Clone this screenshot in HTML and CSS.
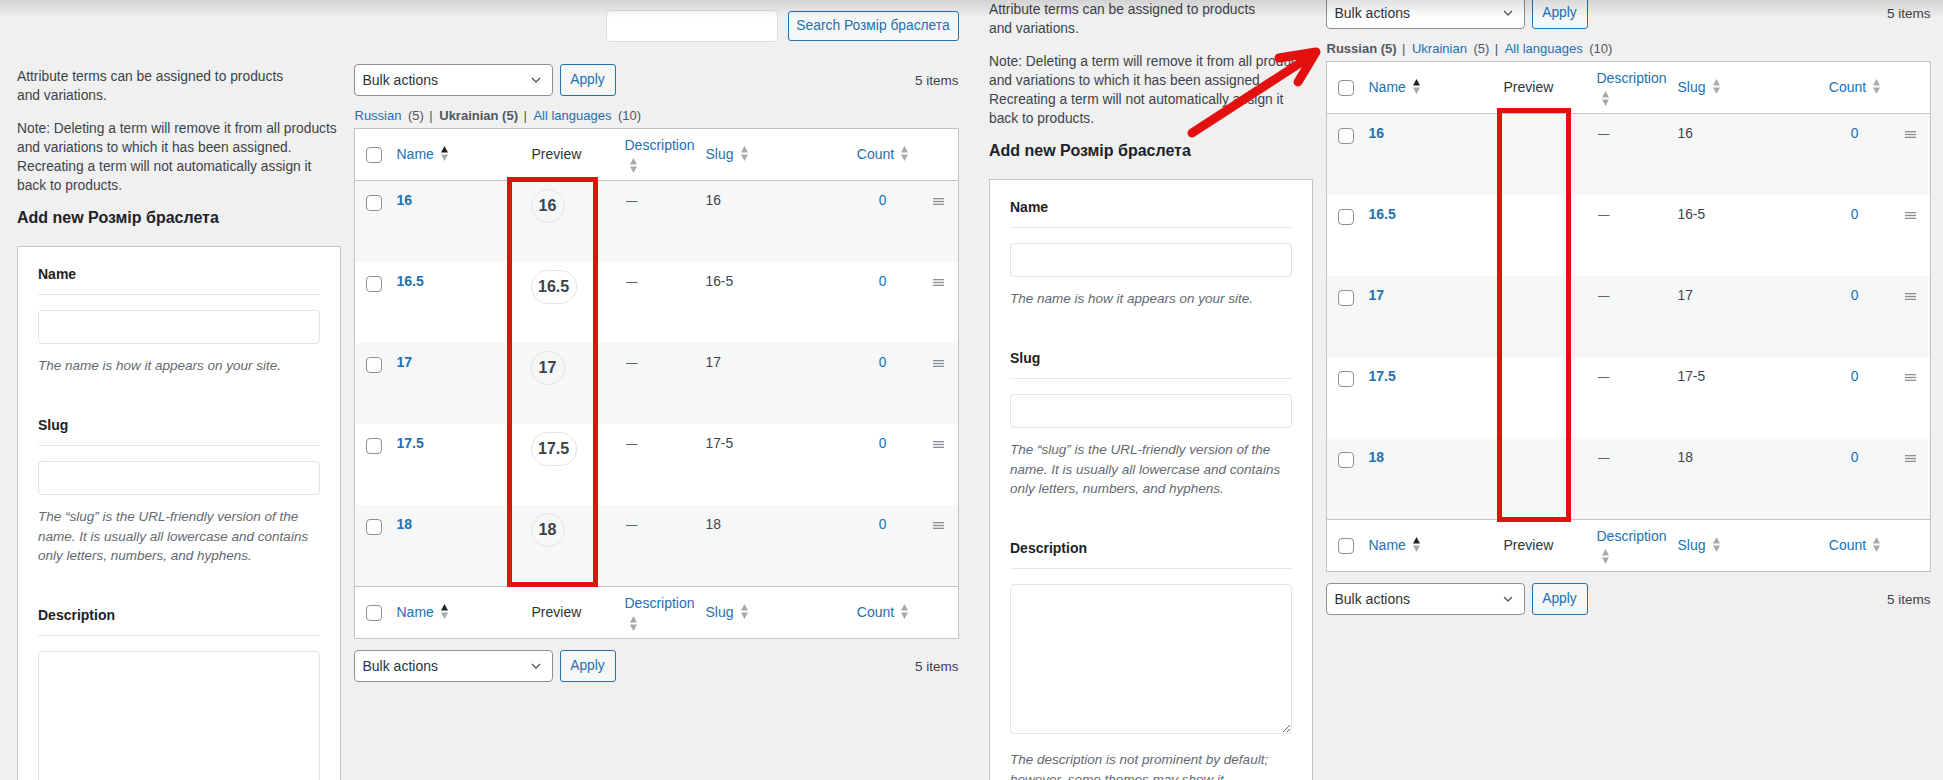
FILE: index.html
```html
<!DOCTYPE html>
<html lang="en">
<head>
<meta charset="utf-8">
<title>Розмір браслета — attribute terms</title>
<link rel="stylesheet" href="styles.css">
</head>
<body>
<svg class="defs" width="0" height="0" aria-hidden="true">
  <symbol id="sort-asc" viewBox="0 0 7 15"><polygon points="0,6.5 3.5,0 7,6.5" fill="#1d2327"/><polygon points="0,8.5 7,8.5 3.5,15" fill="#a7aaad"/></symbol>
  <symbol id="sort-idle" viewBox="0 0 7 15"><polygon points="0,6.5 3.5,0 7,6.5" fill="#a7aaad"/><polygon points="0,8.5 7,8.5 3.5,15" fill="#a7aaad"/></symbol>
  <symbol id="chev" viewBox="0 0 10 6"><path d="M1 1l4 4 4-4" fill="none" stroke="#50575e" stroke-width="1.3"/></symbol>
  <symbol id="drag" viewBox="0 0 11 7"><rect x="0" y="0" width="11" height="1.3" fill="#8c8f94"/><rect x="0" y="2.85" width="11" height="1.3" fill="#8c8f94"/><rect x="0" y="5.7" width="11" height="1.3" fill="#8c8f94"/></symbol>
</svg>
<main class="composite">
  <!-- LEFT SCREENSHOT -->
  <section class="shot shot-left">
    <div class="page">
      <div class="topbar">
        <input class="search-input" type="search" aria-label="Search">
        <button class="btn btn-search">Search Розмір браслета</button>
      </div>
      <div class="cols">
        <div class="col-form">
          <p class="intro">Attribute terms can be assigned to products<br>and variations.</p>
          <p class="intro">Note: Deleting a term will remove it from all products<br>and variations to which it has been assigned.<br>Recreating a term will not automatically assign it<br>back to products.</p>
          <h2 class="add-title">Add new Розмір браслета</h2>
          <div class="card">
            <div class="field">
              <label class="field-label">Name</label>
              <input class="field-input" type="text">
              <p class="help">The name is how it appears on your site.</p>
            </div>
            <div class="field">
              <label class="field-label">Slug</label>
              <input class="field-input" type="text">
              <p class="help">The “slug” is the URL-friendly version of the name. It is usually all lowercase and contains only letters, numbers, and hyphens.</p>
            </div>
            <div class="field">
              <label class="field-label">Description</label>
              <textarea class="field-area"></textarea>
              <p class="help help-area">The description is not prominent by default; however, some themes may show it.</p>
            </div>
          </div>
        </div>
        <div class="col-table">
          <div class="tablenav">
            <div class="select"><span>Bulk actions</span><svg class="chev"><use href="#chev"/></svg></div>
            <button class="btn btn-apply">Apply</button>
            <span class="items">5 items</span>
          </div>
          <div class="langs">
            <a class="lnk">Russian</a><span class="count">(5)</span><span class="sep">|</span><strong class="cur">Ukrainian (5)</strong><span class="sep">|</span><a class="lnk">All languages</a><span class="count">(10)</span>
          </div>
          <table class="terms">
            <colgroup><col class="c-check"><col class="c-name"><col class="c-preview"><col class="c-desc"><col class="c-slug"><col class="c-count"><col class="c-handle"></colgroup>
            <thead>
              <tr>
                <th class="check"><span class="cb"></span></th>
                <th><a class="sort">Name<svg class="ind"><use href="#sort-asc"/></svg></a></th>
                <th>Preview</th>
                <th class="desc"><div class="clip"><a class="sort-text">Description</a><svg class="ind ind-below"><use href="#sort-idle"/></svg></div></th>
                <th><a class="sort">Slug<svg class="ind"><use href="#sort-idle"/></svg></a></th>
                <th class="center"><a class="sort">Count<svg class="ind"><use href="#sort-idle"/></svg></a></th>
                <th></th>
              </tr>
            </thead>
            <tbody>
              <tr><td class="check"><span class="cb"></span></td><td><a class="row-title">16</a></td><td class="preview"><span class="swatch">16</span></td><td class="dash">—</td><td>16</td><td class="center"><a class="lnk">0</a></td><td class="handle"><svg class="drag"><use href="#drag"/></svg></td></tr>
              <tr><td class="check"><span class="cb"></span></td><td><a class="row-title">16.5</a></td><td class="preview"><span class="swatch">16.5</span></td><td class="dash">—</td><td>16-5</td><td class="center"><a class="lnk">0</a></td><td class="handle"><svg class="drag"><use href="#drag"/></svg></td></tr>
              <tr><td class="check"><span class="cb"></span></td><td><a class="row-title">17</a></td><td class="preview"><span class="swatch">17</span></td><td class="dash">—</td><td>17</td><td class="center"><a class="lnk">0</a></td><td class="handle"><svg class="drag"><use href="#drag"/></svg></td></tr>
              <tr><td class="check"><span class="cb"></span></td><td><a class="row-title">17.5</a></td><td class="preview"><span class="swatch">17.5</span></td><td class="dash">—</td><td>17-5</td><td class="center"><a class="lnk">0</a></td><td class="handle"><svg class="drag"><use href="#drag"/></svg></td></tr>
              <tr><td class="check"><span class="cb"></span></td><td><a class="row-title">18</a></td><td class="preview"><span class="swatch">18</span></td><td class="dash">—</td><td>18</td><td class="center"><a class="lnk">0</a></td><td class="handle"><svg class="drag"><use href="#drag"/></svg></td></tr>
            </tbody>
            <tfoot>
              <tr>
                <th class="check"><span class="cb"></span></th>
                <th><a class="sort">Name<svg class="ind"><use href="#sort-asc"/></svg></a></th>
                <th>Preview</th>
                <th class="desc"><div class="clip"><a class="sort-text">Description</a><svg class="ind ind-below"><use href="#sort-idle"/></svg></div></th>
                <th><a class="sort">Slug<svg class="ind"><use href="#sort-idle"/></svg></a></th>
                <th class="center"><a class="sort">Count<svg class="ind"><use href="#sort-idle"/></svg></a></th>
                <th></th>
              </tr>
            </tfoot>
          </table>
          <div class="tablenav tablenav-bottom">
            <div class="select"><span>Bulk actions</span><svg class="chev"><use href="#chev"/></svg></div>
            <button class="btn btn-apply">Apply</button>
            <span class="items">5 items</span>
          </div>
        </div>
      </div>
    </div>
    <div class="mark mark-left"></div>
  </section>

  <!-- RIGHT SCREENSHOT -->
  <section class="shot shot-right">
    <div class="page">
      <div class="topbar">
        <input class="search-input" type="search" aria-label="Search">
        <button class="btn btn-search">Search Розмір браслета</button>
      </div>
      <div class="cols">
        <div class="col-form">
          <p class="intro">Attribute terms can be assigned to products<br>and variations.</p>
          <p class="intro">Note: Deleting a term will remove it from all products<br>and variations to which it has been assigned.<br>Recreating a term will not automatically assign it<br>back to products.</p>
          <h2 class="add-title">Add new Розмір браслета</h2>
          <div class="card">
            <div class="field">
              <label class="field-label">Name</label>
              <input class="field-input" type="text">
              <p class="help">The name is how it appears on your site.</p>
            </div>
            <div class="field">
              <label class="field-label">Slug</label>
              <input class="field-input" type="text">
              <p class="help">The “slug” is the URL-friendly version of the name. It is usually all lowercase and contains only letters, numbers, and hyphens.</p>
            </div>
            <div class="field">
              <label class="field-label">Description</label>
              <textarea class="field-area"></textarea>
              <p class="help help-area">The description is not prominent by default; however, some themes may show it.</p>
            </div>
          </div>
        </div>
        <div class="col-table">
          <div class="tablenav">
            <div class="select"><span>Bulk actions</span><svg class="chev"><use href="#chev"/></svg></div>
            <button class="btn btn-apply">Apply</button>
            <span class="items">5 items</span>
          </div>
          <div class="langs">
            <strong class="cur">Russian (5)</strong><span class="sep">|</span><a class="lnk">Ukrainian</a><span class="count">(5)</span><span class="sep">|</span><a class="lnk">All languages</a><span class="count">(10)</span>
          </div>
          <table class="terms">
            <colgroup><col class="c-check"><col class="c-name"><col class="c-preview"><col class="c-desc"><col class="c-slug"><col class="c-count"><col class="c-handle"></colgroup>
            <thead>
              <tr>
                <th class="check"><span class="cb"></span></th>
                <th><a class="sort">Name<svg class="ind"><use href="#sort-asc"/></svg></a></th>
                <th>Preview</th>
                <th class="desc"><div class="clip"><a class="sort-text">Description</a><svg class="ind ind-below"><use href="#sort-idle"/></svg></div></th>
                <th><a class="sort">Slug<svg class="ind"><use href="#sort-idle"/></svg></a></th>
                <th class="center"><a class="sort">Count<svg class="ind"><use href="#sort-idle"/></svg></a></th>
                <th></th>
              </tr>
            </thead>
            <tbody>
              <tr><td class="check"><span class="cb"></span></td><td><a class="row-title">16</a></td><td class="preview"></td><td class="dash">—</td><td>16</td><td class="center"><a class="lnk">0</a></td><td class="handle"><svg class="drag"><use href="#drag"/></svg></td></tr>
              <tr><td class="check"><span class="cb"></span></td><td><a class="row-title">16.5</a></td><td class="preview"></td><td class="dash">—</td><td>16-5</td><td class="center"><a class="lnk">0</a></td><td class="handle"><svg class="drag"><use href="#drag"/></svg></td></tr>
              <tr><td class="check"><span class="cb"></span></td><td><a class="row-title">17</a></td><td class="preview"></td><td class="dash">—</td><td>17</td><td class="center"><a class="lnk">0</a></td><td class="handle"><svg class="drag"><use href="#drag"/></svg></td></tr>
              <tr><td class="check"><span class="cb"></span></td><td><a class="row-title">17.5</a></td><td class="preview"></td><td class="dash">—</td><td>17-5</td><td class="center"><a class="lnk">0</a></td><td class="handle"><svg class="drag"><use href="#drag"/></svg></td></tr>
              <tr><td class="check"><span class="cb"></span></td><td><a class="row-title">18</a></td><td class="preview"></td><td class="dash">—</td><td>18</td><td class="center"><a class="lnk">0</a></td><td class="handle"><svg class="drag"><use href="#drag"/></svg></td></tr>
            </tbody>
            <tfoot>
              <tr>
                <th class="check"><span class="cb"></span></th>
                <th><a class="sort">Name<svg class="ind"><use href="#sort-asc"/></svg></a></th>
                <th>Preview</th>
                <th class="desc"><div class="clip"><a class="sort-text">Description</a><svg class="ind ind-below"><use href="#sort-idle"/></svg></div></th>
                <th><a class="sort">Slug<svg class="ind"><use href="#sort-idle"/></svg></a></th>
                <th class="center"><a class="sort">Count<svg class="ind"><use href="#sort-idle"/></svg></a></th>
                <th></th>
              </tr>
            </tfoot>
          </table>
          <div class="tablenav tablenav-bottom">
            <div class="select"><span>Bulk actions</span><svg class="chev"><use href="#chev"/></svg></div>
            <button class="btn btn-apply">Apply</button>
            <span class="items">5 items</span>
          </div>
        </div>
      </div>
    </div>
    <div class="mark mark-right"></div>
  </section>

  <svg class="arrow" viewBox="0 0 145 100" aria-hidden="true">
    <path d="M7 88 L129 9" fill="none" stroke="#e3100f" stroke-width="9" stroke-linecap="round"/>
    <path d="M94 13 L131 7 L113 37" fill="none" stroke="#e3100f" stroke-width="9" stroke-linecap="round" stroke-linejoin="round"/>
  </svg>
</main>
</body>
</html>
```

FILE: styles.css
```css
* { box-sizing: border-box; }

html, body {
  margin: 0;
  padding: 0;
}

body {
  width: 1943px;
  height: 780px;
  overflow: hidden;
  background: #f0f0f1;
  font-family: "Liberation Sans", Arial, sans-serif;
  font-size: 13.8px;
  line-height: 19px;
  color: #3c434a;
}

.defs { position: absolute; width: 0; height: 0; overflow: hidden; }

.composite {
  position: relative;
  display: flex;
  width: 1943px;
  height: 780px;
}

.shot {
  position: relative;
  flex: none;
  height: 780px;
  overflow: hidden;
  background: #f0f0f1;
}

.shot::before {
  content: "";
  position: absolute;
  left: 0;
  right: 0;
  top: 0;
  height: 18px;
  background: linear-gradient(rgba(0, 0, 0, 0.12), rgba(0, 0, 0, 0));
  z-index: 3;
  pointer-events: none;
}

.shot-left { width: 971px; }
.shot-right { width: 972px; }

.page { padding: 10px 0 0 17px; }
.shot-right .page { margin-top: -67px; padding-left: 18px; }

/* top search bar */
.topbar {
  display: flex;
  justify-content: flex-end;
  align-items: center;
  gap: 10px;
  width: 941.5px;
  height: 32px;
}

.search-input {
  width: 172px;
  height: 32px;
  border: 1px solid #dcdcde;
  border-radius: 4px;
  background: #fff;
  padding: 0 8px;
  font: inherit;
}

.btn {
  font-family: inherit;
  font-size: 13.8px;
  line-height: 1;
  color: #2271b1;
  background: #f6f7f7;
  border: 1px solid #2271b1;
  border-radius: 3px;
  padding: 0 10px;
  cursor: pointer;
}

.btn-search { height: 30px; width: 171px; padding: 0; }
.btn-apply { height: 32px; width: 56px; padding: 0; }

/* two columns */
.cols {
  display: flex;
  gap: 12.5px;
  margin-top: 22px;
}

.col-form { width: 324px; flex: none; }
.col-table { width: 605px; flex: none; }

.intro { margin: 0; }
.intro:first-child { padding-top: 2.5px; }
.intro + .intro { margin-top: 14px; }

.add-title {
  margin: 12.5px 0 17px;
  font-size: 16px;
  line-height: 22px;
  font-weight: 700;
  color: #1d2327;
}

.card {
  background: #fff;
  border: 1px solid #c3c4c7;
  padding: 17px 20px 0;
  min-height: 640px;
}

.field { margin-bottom: 39.5px; }

.field-label {
  display: block;
  font-size: 14px;
  line-height: 20px;
  font-weight: 700;
  color: #1d2327;
  padding-bottom: 10px;
  border-bottom: 1px solid #e8e8e9;
  margin-bottom: 15px;
}

.field-input {
  display: block;
  width: 100%;
  height: 34px;
  border: 1px solid #e2e3e5;
  border-radius: 4px;
  background: #fff;
  padding: 0 8px;
  font: inherit;
}

.field-area {
  display: block;
  width: 100%;
  height: 150px;
  border: 1px solid #e2e3e5;
  border-radius: 4px;
  background: #fff;
  font: inherit;
  resize: vertical;
}

.help {
  margin: 12px 0 0;
  font-size: 13.5px;
  line-height: 19.5px;
  font-style: italic;
  color: #646970;
}

.help-area { margin-top: 16px; }

/* table nav */
.tablenav {
  display: flex;
  align-items: center;
  gap: 6.5px;
  height: 32px;
}

.tablenav-bottom { margin-top: 11px; }

.select {
  width: 199.5px;
  height: 32px;
  border: 1px solid #8c8f94;
  border-radius: 4px;
  background: #fff;
  display: flex;
  align-items: center;
  justify-content: space-between;
  padding: 0 11px 0 8px;
  font-size: 14px;
  color: #2c3338;
}

.chev { width: 10px; height: 6px; }

.items {
  margin-left: auto;
  font-size: 13.5px;
  color: #3c434a;
}

.langs {
  display: flex;
  align-items: baseline;
  margin-top: 10px;
  padding-left: 1px;
  font-size: 13px;
  line-height: 20px;
  color: #50575e;
}

.lnk { color: #2271b1; text-decoration: none; }
.langs .count { margin-left: 6.5px; color: #50575e; }
.langs .sep { margin: 0 6.5px 0 5.5px; color: #50575e; }
.langs .cur { font-weight: 700; color: #50575e; }

/* list table */
.terms {
  margin-top: 2px;
  width: 605px;
  table-layout: fixed;
  border-collapse: separate;
  border-spacing: 0;
  border: 1px solid #c3c4c7;
  background: #fff;
}

.c-check { width: 32px; }
.c-name { width: 135px; }
.c-preview { width: 93px; }
.c-desc { width: 81px; }
.c-slug { width: 150px; }
.c-count { width: 74px; }
.c-handle { width: 38px; }

.terms th {
  height: 52px;
  padding: 0 10px;
  text-align: left;
  vertical-align: middle;
  font-weight: 400;
  font-size: 14px;
  line-height: 19px;
  color: #2c3338;
}

.terms thead th { border-bottom: 1px solid #c3c4c7; }
.terms tfoot th { border-top: 1px solid #c3c4c7; }

.terms th.check,
.terms td.check { padding: 0 0 0 11px; }

.terms td.check { padding-top: 12px; }

.terms th.center,
.terms td.center { text-align: center; }

.terms th.desc { padding-right: 0; }

.clip {
  overflow: hidden;
  white-space: nowrap;
}

.sort {
  display: inline-flex;
  align-items: center;
  gap: 7px;
  color: #2271b1;
  text-decoration: none;
}

.sort-text {
  display: block;
  color: #2271b1;
  text-decoration: none;
}

.ind {
  width: 7px;
  height: 15px;
  flex: none;
  margin-top: -3px;
}

.ind-below {
  display: block;
  margin: 2.5px 0 0 5px;
}

.cb {
  display: inline-block;
  width: 16px;
  height: 16px;
  border: 1px solid #8c8f94;
  border-radius: 4px;
  background: #fff;
  vertical-align: middle;
}

.terms td {
  height: 81px;
  padding: 10px 10px 0;
  vertical-align: top;
  font-size: 13.8px;
  line-height: 19.5px;
  color: #3c434a;
}

.terms tbody tr:nth-child(odd) td { background: #f6f7f7; }

.row-title {
  font-size: 14px;
  font-weight: 700;
  color: #2271b1;
  text-decoration: none;
}

.terms td.preview { padding: 8px 0 0 9px; }

.swatch {
  display: inline-flex;
  align-items: center;
  justify-content: center;
  min-width: 34px;
  height: 34px;
  padding: 0 6.5px;
  border: 1px solid #e4e5e7;
  border-radius: 17px;
  font-size: 16px;
  font-weight: 700;
  color: #3c434a;
}

.terms td.dash {
  padding-left: 11.5px;
  font-size: 11.5px;
  color: #3c434a;
}

.terms td.handle {
  padding-left: 0;
  padding-right: 0;
  text-align: center;
}

.drag {
  width: 11px;
  height: 7px;
  vertical-align: middle;
}

/* annotations */
.mark {
  position: absolute;
  border: 5px solid #e3100f;
  z-index: 4;
  pointer-events: none;
}

.mark-left {
  left: 506.5px;
  top: 177px;
  width: 91.5px;
  height: 410px;
}

.mark-right {
  left: 525.5px;
  top: 108px;
  width: 74px;
  height: 414px;
}

.arrow {
  position: absolute;
  left: 1185px;
  top: 45px;
  width: 145px;
  height: 100px;
  z-index: 5;
  overflow: visible;
}
```
